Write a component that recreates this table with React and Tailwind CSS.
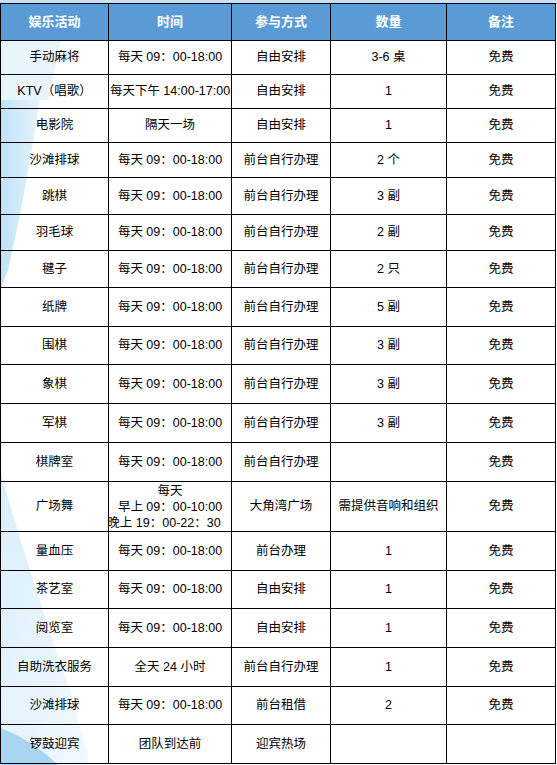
import React from "react";

const rows = [
  { h: "h-[34px]", c: ["手动麻将", "每天 09：00-18:00", "自由安排", "3-6 桌", "免费"] },
  { h: "h-[34px]", c: ["KTV（唱歌）", "每天下午 14:00-17:00", "自由安排", "1", "免费"] },
  { h: "h-[34px]", c: ["电影院", "隔天一场", "自由安排", "1", "免费"] },
  { h: "h-[35px]", c: ["沙滩排球", "每天 09：00-18:00", "前台自行办理", "2 个", "免费"] },
  { h: "h-[37px]", c: ["跳棋", "每天 09：00-18:00", "前台自行办理", "3 副", "免费"] },
  { h: "h-[36px]", c: ["羽毛球", "每天 09：00-18:00", "前台自行办理", "2 副", "免费"] },
  { h: "h-[37px]", c: ["毽子", "每天 09：00-18:00", "前台自行办理", "2 只", "免费"] },
  { h: "h-[39px]", c: ["纸牌", "每天 09：00-18:00", "前台自行办理", "5 副", "免费"] },
  { h: "h-[38px]", c: ["围棋", "每天 09：00-18:00", "前台自行办理", "3 副", "免费"] },
  { h: "h-[39px]", c: ["象棋", "每天 09：00-18:00", "前台自行办理", "3 副", "免费"] },
  { h: "h-[39px]", c: ["军棋", "每天 09：00-18:00", "前台自行办理", "3 副", "免费"] },
  { h: "h-[39px]", c: ["棋牌室", "每天 09：00-18:00", "前台自行办理", "", "免费"] },
  { h: "h-[50px]", c: ["广场舞", "MULTI", "大角湾广场", "需提供音响和组织", "免费"] },
  { h: "h-[39px]", c: ["量血压", "每天 09：00-18:00", "前台办理", "1", "免费"] },
  { h: "h-[38px]", c: ["茶艺室", "每天 09：00-18:00", "自由安排", "1", "免费"] },
  { h: "h-[39px]", c: ["阅览室", "每天 09：00-18:00", "自由安排", "1", "免费"] },
  { h: "h-[39px]", c: ["自助洗衣服务", "全天 24 小时", "前台自行办理", "1", "免费"] },
  { h: "h-[38px]", c: ["沙滩排球", "每天 09：00-18:00", "前台租借", "2", "免费"] },
  { h: "h-[39px]", c: ["锣鼓迎宾", "团队到达前", "迎宾热场", "", ""] },
];

const headers = ["娱乐活动", "时间", "参与方式", "数量", "备注"];
const grid = "grid grid-cols-[108px_123px_99px_116px_109px]";

function Background() {
  return (
    <svg className="absolute inset-0" width="557" height="765" viewBox="0 0 557 765">
      <defs>
        <linearGradient id="g1" x1="0" y1="0" x2="1" y2="0">
          <stop offset="0" stopColor="#bfe2f7" />
          <stop offset="1" stopColor="#e6f4fc" />
        </linearGradient>
        <linearGradient id="g2" x1="0" y1="0" x2="1" y2="1">
          <stop offset="0" stopColor="#d9eefb" />
          <stop offset="1" stopColor="#f2f9fe" />
        </linearGradient>
      </defs>
      <rect x="0" y="0" width="557" height="4" fill="#c6e2f6" />
      <path d="M0 4 L70 4 C60 40 55 70 48 100 L0 100 Z" fill="#e8f5fd" />
      <path d="M0 100 L40 100 C32 150 22 210 8 270 L0 290 Z" fill="url(#g1)" />
      <path d="M0 470 C20 540 45 620 70 690 C78 720 85 745 90 765 L0 765 Z" fill="url(#g2)" />
      <path d="M0 728 C20 735 40 748 58 765 L0 765 Z" fill="#a8d6f2" />
    </svg>
  );
}

function Cell({ children, className = "" }) {
  return (
    <div className={`flex items-center justify-center border-r border-b border-black text-center whitespace-nowrap ${className}`}>
      {children}
    </div>
  );
}

export default function App() {
  return (
    <div
      className="relative w-[557px] h-[765px] overflow-hidden bg-white text-black"
      style={{ fontFamily: '"Liberation Sans", "Noto Sans CJK SC", sans-serif' }}
    >
      <Background />
      <div className="relative mt-[3px] w-[556px] border-l border-t border-black text-[12.5px]">
        <div className={`${grid} h-[37px] bg-[#5b9bd5] text-white font-bold text-[13px]`}>
          {headers.map((h) => (
            <Cell key={h}>{h}</Cell>
          ))}
        </div>
        {rows.map((r, i) => (
          <div key={i} className={`${grid} ${r.h}`}>
            {r.c.map((t, j) =>
              t === "MULTI" ? (
                <Cell key={j} className="flex-col leading-[16px]">
                  <span>每天</span>
                  <span>早上 09：00-10:00</span>
                  <span className="-ml-[12px]">晚上 19：00-22：30</span>
                </Cell>
              ) : (
                <Cell key={j}>{t}</Cell>
              )
            )}
          </div>
        ))}
      </div>
    </div>
  );
}
